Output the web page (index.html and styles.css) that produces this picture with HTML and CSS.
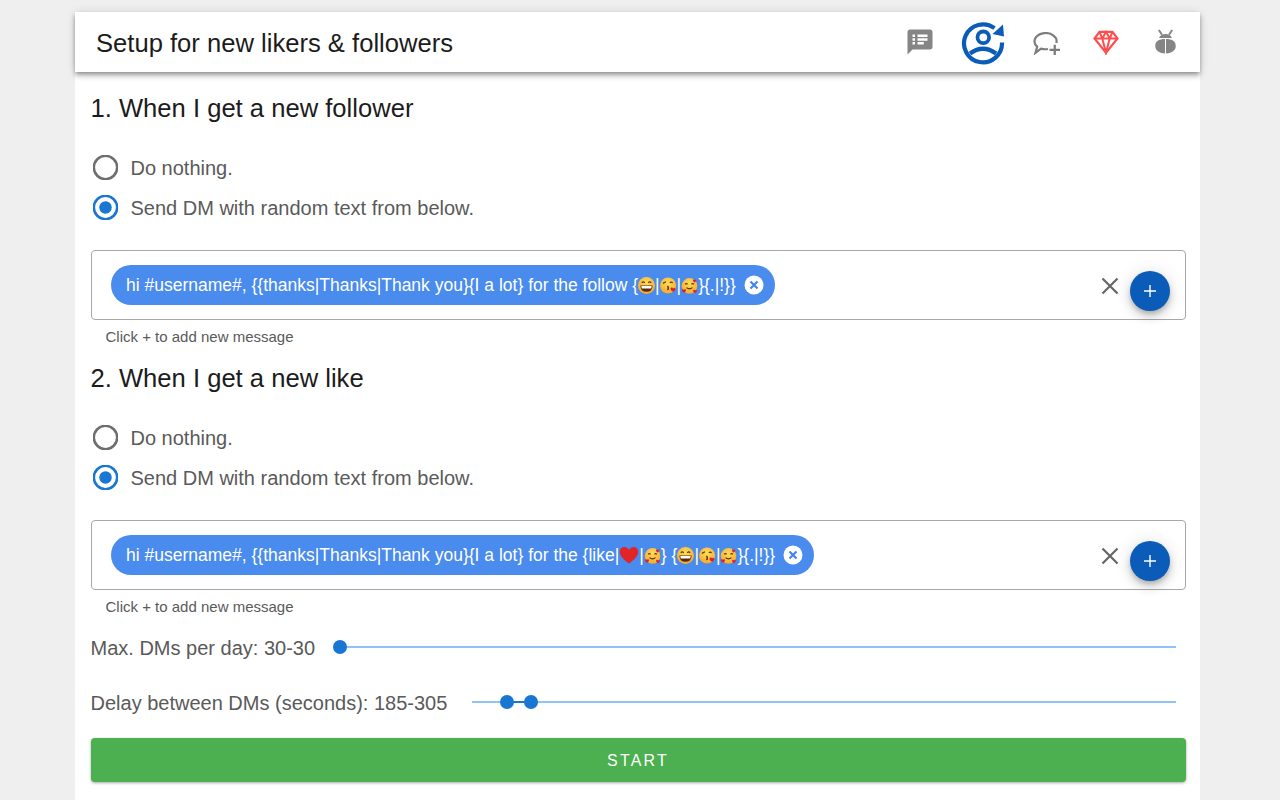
FILE: index.html
```html
<!DOCTYPE html>
<html lang="en">
<head>
<meta charset="utf-8">
<title>Setup for new likers &amp; followers</title>
<link rel="stylesheet" href="styles.css">
</head>
<body>
<svg class="defs" width="0" height="0" aria-hidden="true">
  <defs>
    <radialGradient id="face" cx="50%" cy="35%" r="70%"><stop offset="0" stop-color="#ffdc5e"/><stop offset="1" stop-color="#f5a623"/></radialGradient>
    <symbol id="e-grin" viewBox="0 0 20 20">
      <circle cx="10" cy="10" r="10" fill="url(#face)"/>
      <path d="M4.500 6.800q1.700-2 3.400 0M12.100 6.800q1.700-2 3.400 0" fill="none" stroke="#5b3a10" stroke-width="1.400"/>
      <path d="M2.800 10h14.400q0 7.400-7.200 7.400T2.800 10z" fill="#5b2a10"/>
      <path d="M4 10.700h12q0 2.100-.5 2.800H4.500q-.5-.7-.5-2.800z" fill="#fff"/>
    </symbol>
    <symbol id="e-kiss" viewBox="0 0 20 20">
      <circle cx="9.500" cy="10" r="9.500" fill="url(#face)"/>
      <path d="M3.500 7.500l3.500-1.800M11.500 7q1.700-1.700 3.400 0" fill="none" stroke="#5b3a10" stroke-width="1.400"/>
      <path d="M8.500 11q2.200.5.900 1.900 1.300 1.100-.9 2.200" fill="none" stroke="#5b2a10" stroke-width="1.400"/>
      <path d="M15.500 17.500c-3.200-2.200-3.700-3.800-2.800-4.700.8-.8 2.200-.3 2.600.6.700-.9 2.100-1 2.700 0 .7 1.100-.4 2.700-2.500 4.100z" fill="#e0202c"/>
    </symbol>
    <symbol id="e-love" viewBox="0 0 20 20">
      <circle cx="10" cy="10.500" r="9.200" fill="url(#face)"/>
      <path d="M4.800 8.500q1.500-1.300 3 0M12.200 8.500q1.500-1.300 3 0" fill="none" stroke="#5b3a10" stroke-width="1.300"/>
      <path d="M6.500 12.500q3.500 3 7 0" fill="none" stroke="#5b2a10" stroke-width="1.300"/>
      <path d="M16 6.500C14 5 13.800 3.800 14.300 3.200c.5-.6 1.300-.3 1.700.3.400-.6 1.300-.8 1.800-.2.500.7 0 2-1.800 3.200zM3.500 18.500C1 16.800.8 15.500 1.300 14.800c.5-.7 1.600-.4 2.200.3.500-.7 1.600-.9 2.200-.2.600.8 0 2.300-2.200 3.600zM16.500 19c-2.300-1.500-2.600-2.800-2-3.500.5-.6 1.500-.4 2 .3.500-.7 1.500-.9 2-.2.600.8 0 2.200-2 3.400z" fill="#e0202c"/>
    </symbol>
    <symbol id="e-heart" viewBox="0 0 20 20">
      <path d="M10 18.500C3 13.500.8 10 .8 6.800.8 3.800 3 2 5.400 2 7.300 2 9 3.100 10 5c1-1.900 2.700-3 4.600-3 2.400 0 4.600 1.800 4.600 4.800 0 3.200-2.200 6.700-9.200 11.700z" fill="#e02428"/>
    </symbol>
  </defs>
</svg>
<div class="page">
  <header class="topbar">
    <h1 class="title">Setup for new likers &amp; followers</h1>
    <nav class="tools">
      <svg class="tool tool-notes" viewBox="0 0 24 24"><path fill="#858585" d="M20 2H4c-1.100 0-1.990.9-1.990 2L2 22l4-4h14c1.100 0 2-.9 2-2V4c0-1.100-.9-2-2-2zM8 14H6v-2h2v2zm0-3H6V9h2v2zm0-3H6V6h2v2zm7 6h-5v-2h5v2zm3-3h-8V9h8v2zm0-3h-8V6h8v2z"/></svg>
      <svg class="tool tool-sync" viewBox="0 0 44 44">
        <path d="M33.500 7.200A19 19 0 1 0 41 21.500" fill="none" stroke="#0a5cb8" stroke-width="4.200"/>
        <path d="M31.500 13L42 3.500 43 15.500z" fill="#0a5cb8"/>
        <circle cx="22.300" cy="16.300" r="5.800" fill="none" stroke="#0a5cb8" stroke-width="3.800"/>
        <path d="M9 32.500Q22 23 35 32.500" fill="none" stroke="#0a5cb8" stroke-width="4.200"/>
      </svg>
      <svg class="tool tool-chat" viewBox="0 0 27 23">
        <path d="M15 17A11 8.200 0 0 1 8 16.600L2.500 20.800 4.200 14.600A11 8.200 0 1 1 23.300 11" fill="none" stroke="#7d7d7d" stroke-width="2.200"/>
        <path d="M20.600 12.800h2.300v3.900h4.100V19h-4.100v4h-2.300v-4H16.500v-2.300h4.100z" fill="#7d7d7d"/>
      </svg>
      <svg class="tool tool-gem" viewBox="0 0 26 26">
        <path d="M6.500 2.800h13l5 6.700L13 23.800 1.500 9.500z" fill="none" stroke="#ff4d4d" stroke-width="2.200"/>
        <path d="M1.500 9.500h23M6.500 2.800l2.800 6.700L13 23.800 16.700 9.500l2.800-6.700M9.300 9.500L13 2.800l3.700 6.700" fill="none" stroke="#ff4d4d" stroke-width="2"/>
      </svg>
      <svg class="tool tool-bug" viewBox="0 0 21 25">
        <path d="M10 10C4.500 10 .3 12 .3 16.500v1C.3 21.500 5 24.500 10 24.500zM11 10c5.500 0 9.700 2 9.700 6.500v1c0 4-4.700 7-9.700 7z" fill="#858585"/>
        <path d="M4 9C6 3.500 15 3.500 17 9z" fill="#858585"/>
        <path d="M3.800 1L7 5.800M17.200 1L14 5.800" fill="none" stroke="#858585" stroke-width="2"/>
      </svg>
    </nav>
  </header>

  <main class="content">
    <section class="block">
      <h2 class="heading">1. When I get a new follower</h2>
      <div class="radios">
        <label class="radio"><svg class="radio-icon" viewBox="0 0 24 24"><circle cx="12" cy="12" r="11.200" fill="none" stroke="#6e6e6e" stroke-width="2.400"/></svg><span class="radio-text">Do nothing.</span></label>
        <label class="radio"><svg class="radio-icon" viewBox="0 0 24 24"><circle cx="12" cy="12" r="11.200" fill="none" stroke="#1976d2" stroke-width="2.400"/><circle cx="12" cy="12" r="6" fill="#1976d2"/></svg><span class="radio-text">Send DM with random text from below.</span></label>
      </div>
      <div class="chipbox">
        <span class="chip"><span class="chip-text">hi #username#, {{thanks|Thanks|Thank you}{I a lot} for the follow {<svg class="emoji"><use href="#e-grin"/></svg>|<svg class="emoji"><use href="#e-kiss"/></svg>|<svg class="emoji"><use href="#e-love"/></svg>}{.|!}}</span>
          <svg class="chip-del" viewBox="0 0 20 20"><circle cx="10" cy="10" r="9.500" fill="#fff"/><path d="M6.500 6.500l7 7m0-7l-7 7" stroke="#3f86ee" stroke-width="2.200"/></svg>
        </span>
        <svg class="clear" viewBox="0 0 20 20"><path d="M2.500 2.500l15 15m0-15l-15 15" stroke="#666" stroke-width="2.200"/></svg>
        <button class="fab" type="button" aria-label="Add"><svg viewBox="0 0 14 14"><path d="M6.300 1h1.400v5.300H13v1.400H7.700V13H6.300V7.700H1V6.300h5.300z" fill="#fff"/></svg></button>
      </div>
      <p class="hint">Click + to add new message</p>
    </section>

    <section class="block">
      <h2 class="heading">2. When I get a new like</h2>
      <div class="radios">
        <label class="radio"><svg class="radio-icon" viewBox="0 0 24 24"><circle cx="12" cy="12" r="11.200" fill="none" stroke="#6e6e6e" stroke-width="2.400"/></svg><span class="radio-text">Do nothing.</span></label>
        <label class="radio"><svg class="radio-icon" viewBox="0 0 24 24"><circle cx="12" cy="12" r="11.200" fill="none" stroke="#1976d2" stroke-width="2.400"/><circle cx="12" cy="12" r="6" fill="#1976d2"/></svg><span class="radio-text">Send DM with random text from below.</span></label>
      </div>
      <div class="chipbox">
        <span class="chip"><span class="chip-text">hi #username#, {{thanks|Thanks|Thank you}{I a lot} for the {like|<svg class="emoji emoji-heart"><use href="#e-heart"/></svg>|<svg class="emoji"><use href="#e-love"/></svg>} {<svg class="emoji"><use href="#e-grin"/></svg>|<svg class="emoji"><use href="#e-kiss"/></svg>|<svg class="emoji"><use href="#e-love"/></svg>}{.|!}}</span>
          <svg class="chip-del" viewBox="0 0 20 20"><circle cx="10" cy="10" r="9.500" fill="#fff"/><path d="M6.500 6.500l7 7m0-7l-7 7" stroke="#3f86ee" stroke-width="2.200"/></svg>
        </span>
        <svg class="clear" viewBox="0 0 20 20"><path d="M2.500 2.500l15 15m0-15l-15 15" stroke="#666" stroke-width="2.200"/></svg>
        <button class="fab" type="button" aria-label="Add"><svg viewBox="0 0 14 14"><path d="M6.300 1h1.400v5.300H13v1.400H7.700V13H6.300V7.700H1V6.300h5.300z" fill="#fff"/></svg></button>
      </div>
      <p class="hint">Click + to add new message</p>
    </section>

    <div class="slider-row slider-row-first">
      <span class="slider-label">Max. DMs per day: 30-30</span>
      <div class="slider">
        <span class="thumb" style="left:0%"></span>
      </div>
    </div>
    <div class="slider-row slider-row-second">
      <span class="slider-label">Delay between DMs (seconds): 185-305</span>
      <div class="slider">
        <span class="range" style="left:4.97%;width:3.41%"></span>
        <span class="thumb" style="left:4.97%"></span>
        <span class="thumb" style="left:8.38%"></span>
      </div>
    </div>
    <button class="start" type="button">START</button>
  </main>
</div>
</body>
</html>
```

FILE: styles.css
```css
* { box-sizing: border-box; }
html, body { height: 100%; }
body {
  margin: 0;
  background: #efefef;
  font-family: "Liberation Sans", Arial, sans-serif;
  overflow: hidden;
}
.defs { position: absolute; }
.page {
  width: 1125px;
  height: 800px;
  margin-left: 75px;
  padding-top: 12px;
}
.topbar {
  position: relative;
  z-index: 1;
  height: 60px;
  background: #fff;
  display: flex;
  align-items: center;
  justify-content: space-between;
  padding-left: 21px;
  box-shadow: 0 2px 4px -1px rgba(0,0,0,.3), 0 4px 5px 0 rgba(0,0,0,.2), 0 1px 10px 0 rgba(0,0,0,.12);
}
.title {
  margin: 0;
  padding-top: 3px;
  font-size: 25.600px;
  font-weight: 400;
  color: #1c1c1c;
}
.tools { display: flex; align-items: center; height: 60px; width: 296px; position: relative; }
.tool { display: block; flex: none; }
.tool-notes { width: 30px; height: 30px; margin-left: 1px; margin-right: 26px; margin-top: -1px; }
.tool-sync { width: 44px; height: 44px; margin-right: 27.500px; margin-top: 1px; }
.tool-chat { width: 27px; height: 23px; margin-right: 33px; margin-top: 2px; }
.tool-gem { width: 26px; height: 26px; margin-right: 36.500px; }
.tool-bug { width: 21px; height: 25px; margin-top: -1px; }
.content {
  height: 728px;
  background: #fff;
  padding: 5px 14.500px 0 15.500px;
}
.heading {
  margin: 15px 0 23px;
  height: 32px;
  font-size: 25.600px;
  line-height: 32px;
  font-weight: 400;
  color: #1c1c1c;
}
.radios { display: flex; flex-direction: column; margin-bottom: 23px; }
.radio {
  height: 40px;
  display: flex;
  align-items: center;
  gap: 13px;
  padding-left: 2px;
  font-size: 20px;
  color: #5a5a5a;
}
.radio-text { padding-top: 2px; }
.radio-icon { width: 25px; height: 25px; flex: none; }
.chipbox {
  position: relative;
  height: 70px;
  border: 1px solid #a8a8a8;
  border-radius: 4px;
  padding: 14px 0 0 19.500px;
}
.chip {
  display: inline-flex;
  align-items: center;
  height: 40px;
  border-radius: 20px;
  background: #4a8bee;
  color: #fff;
  font-size: 17.500px;
  padding: 0 11px 0 15px;
  white-space: nowrap;
}
.chip-text { display: inline-flex; align-items: center; }
.emoji { width: 17px; height: 17px; flex: none; }
.emoji-heart { width: 20px; height: 20px; }
.chip-del { width: 20px; height: 20px; margin-left: 8px; flex: none; }
.clear {
  position: absolute;
  right: 65px;
  top: 25px;
  width: 20px;
  height: 20px;
}
.fab {
  position: absolute;
  right: 15px;
  top: 20px;
  width: 40px;
  height: 40px;
  padding: 0;
  border: 0;
  border-radius: 50%;
  background: #0a5cb8;
  display: flex;
  align-items: center;
  justify-content: center;
  box-shadow: 0 3px 5px -1px rgba(0,0,0,.2), 0 6px 10px 0 rgba(0,0,0,.14), 0 1px 18px 0 rgba(0,0,0,.12);
}
.fab svg { width: 14px; height: 14px; }
.hint {
  margin: 0;
  padding: 7px 0 0 15px;
  font-size: 15px;
  line-height: 20px;
  color: #5a5a5a;
}
.slider-row { display: flex; align-items: center; height: 30px; }
.slider-row-first { margin-top: 15px; }
.slider-row-second { margin-top: 25px; }
.slider-label { padding-top: 2px; font-size: 20px; color: #5a5a5a; white-space: nowrap; }
.slider {
  position: relative;
  height: 2px;
  background: #90c4f9;
  margin-right: 9.500px;
  margin-left: 24.500px;
  flex: 1;
}
.range { position: absolute; top: 0; height: 2px; background: #1976d2; }
.thumb {
  position: absolute;
  top: -6px;
  width: 14px;
  height: 14px;
  margin-left: -7px;
  border-radius: 50%;
  background: #1976d2;
}
.start {
  display: block;
  width: 100%;
  height: 44px;
  margin-top: 21px;
  padding-top: 2px;
  border: 0;
  border-radius: 4px;
  background: #4caf50;
  color: #fff;
  font-family: inherit;
  font-size: 16px;
  letter-spacing: 2.200px;
  box-shadow: 0 1px 3px rgba(0,0,0,.35);
}
```
